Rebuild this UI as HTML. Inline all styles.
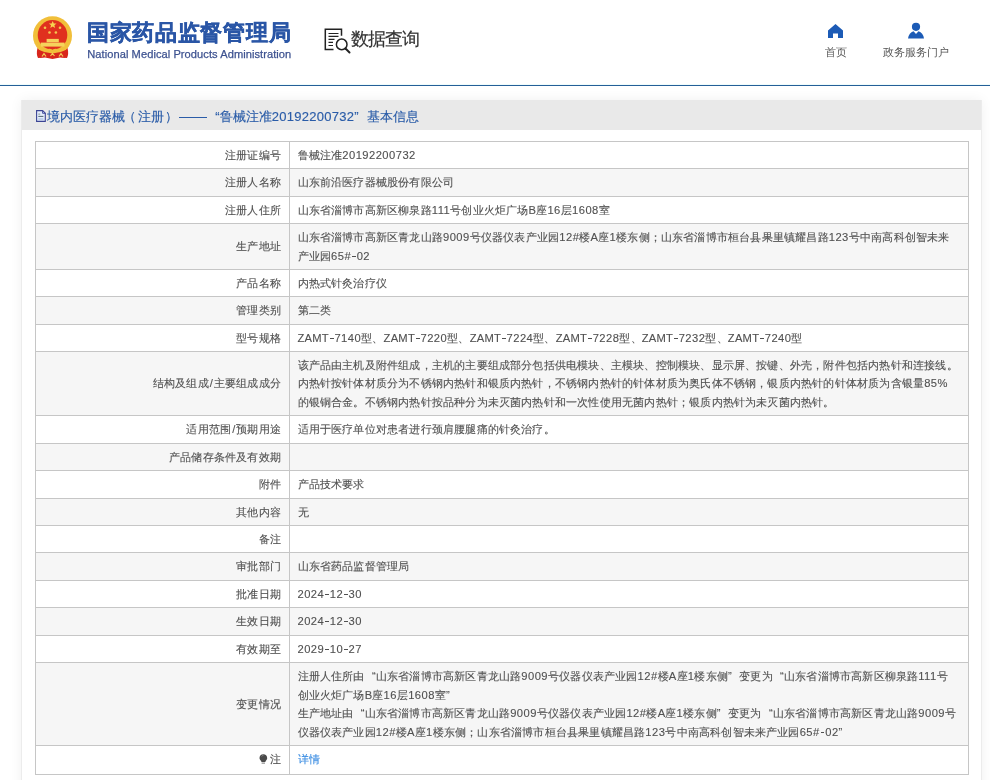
<!DOCTYPE html>
<html><head><meta charset="utf-8">
<style>
*{margin:0;padding:0;box-sizing:border-box}
html,body{width:990px;height:780px;overflow:hidden;background:#fff}
body{font-family:"Liberation Sans",sans-serif;color:#505050}
#wrap{position:relative;width:990px;height:780px;transform:translateZ(0)}
.abs{position:absolute}
#hdrline{left:0;top:85px;width:990px;height:1px;background:#255f98}
#hdrline2{left:0;top:84px;width:990px;height:1px;background:#effcfc}
#t1{left:87px;top:18px;font-size:22px;letter-spacing:0.7px;font-weight:bold;color:#2a56a6;-webkit-text-stroke:0.4px #2a56a6;white-space:nowrap;line-height:30px}
#t2{left:87.3px;top:46.7px;font-size:11.1px;letter-spacing:0.06px;color:#3d5290;-webkit-text-stroke:0.25px #3d5290;white-space:nowrap;line-height:14px}
#q{left:351px;top:26px;font-size:17.5px;letter-spacing:-1px;color:#333;-webkit-text-stroke:0.2px #333;white-space:nowrap;line-height:26px}
.nav{font-size:11.2px;color:#555;white-space:nowrap;line-height:14px;text-align:center}
#panel{left:21px;top:100px;width:961px;height:700px;background:#fff;border:1px solid #ececec;border-top:0;box-shadow:0 0 12px rgba(0,0,0,0.06)}
#phead{left:22px;top:100px;width:959px;height:30px;background:#e9e9e9}
#ptitle{left:47px;top:106.6px;font-size:13px;color:#2a5ca8;-webkit-text-stroke:0.15px #2a5ca8;white-space:nowrap;line-height:19px}
.row{position:absolute;left:35px;width:934px;border:1px solid #c6c6c6;border-bottom:none}
.row.g{background:#f6f6f6}
.lab{-webkit-text-stroke:0.12px #555;position:absolute;left:0;top:0;bottom:0;width:254px;display:flex;align-items:center;justify-content:flex-end;padding-right:9px;font-size:11.2px;line-height:18.5px;letter-spacing:0.19px;white-space:nowrap}
.val{-webkit-text-stroke:0.12px #555;position:absolute;left:253px;top:0;bottom:0;right:0;border-left:1px solid #c6c6c6;display:flex;align-items:center;padding-left:7.5px;font-size:11.2px;line-height:18.5px;letter-spacing:0.19px;white-space:nowrap}
.val>div{}
.hl{position:absolute;left:35px;width:934px;height:1px;background:#c6c6c6}
.d{letter-spacing:0.46px}
.u{letter-spacing:0.25px}
.h{display:inline-block;width:3.8px;height:1.1px;margin:0 0.9px 0 0.8px;background:currentColor;vertical-align:0.26em}
.ql{display:inline-block;width:1em;text-align:right}
.qr{display:inline-block;width:1em;text-align:left}
.dash{display:inline-block;height:1px;background:currentColor;vertical-align:0.32em}
.link{color:#3a8ee6;font-size:12px}
.s{padding:0 0.8px 0 1px}
.row.last .lab,.row.last .val{padding-bottom:1.5px}
.link{color:#3b8de2;font-size:11.2px;-webkit-text-stroke:0.12px #3b8de2}

</style></head><body><div id="wrap">
<div class="abs" id="panel"></div>
<div class="abs" id="hdrline2"></div>
<div class="abs" id="hdrline"></div>
<svg class="abs" style="left:28px;top:12px" width="50" height="50" viewBox="0 0 50 50">
  <path d="M9.5 36 Q8 42 10 46 L17 45.5 L24.5 47 L32 45.5 L39 46 Q41 42 39.5 36 Z" fill="#d8261c"/>
  <circle cx="24.5" cy="23.7" r="19.5" fill="#f1bf3a"/>
  <circle cx="24.5" cy="22.9" r="14.8" fill="#e0301e"/>
  <path d="M9.8 37.5 Q10 44 12 45.8 L20 44.5 L24.5 46 L29 44.5 L37 45.8 Q39 44 39.2 37.5 Q32 41 24.5 41.5 Q17 41 9.8 37.5Z" fill="#d8261c"/>
  <path d="M17 38.5 Q21 35.5 24.5 38 Q28 35.5 32 38.5 Q28 41 24.5 39.5 Q21 41 17 38.5Z" fill="#f1bf3a"/>
  <path d="M14 44.5 L16 41.5 L18 44.5 M31 44.5 L33 41.5 L35 44.5 M22.5 44 L24.5 41.5 L26.5 44" stroke="#f3cc55" stroke-width="1.2" fill="none"/>
  <rect x="18.6" y="26.9" width="12.2" height="3.4" fill="#f6d35c"/>
  <rect x="12.8" y="30.6" width="23.7" height="4" fill="#f6d35c"/>
  <polygon points="24.7,9 25.8,11.5 28.5,11.6 26.4,13.3 27.1,16 24.7,14.5 22.3,16 23,13.3 20.9,11.6 23.6,11.5" fill="#f7d350"/>
  <circle cx="17" cy="15.7" r="1.3" fill="#f3c850"/>
  <circle cx="32" cy="15.7" r="1.3" fill="#f3c850"/>
  <circle cx="21.5" cy="20.5" r="1.3" fill="#f3c850"/>
  <circle cx="27.9" cy="20.5" r="1.3" fill="#f3c850"/>
</svg>
<div class="abs" id="t1">国家药品监督管理局</div>
<div class="abs" id="t2">National Medical Products Administration</div>
<svg class="abs" style="left:322px;top:26px" width="32" height="30" viewBox="0 0 32 30">
  <path d="M11.5 23.5 H3.3 V3.2 H19.5 V9.8" stroke="#222" stroke-width="1.5" fill="none"/>
  <path d="M6.5 7.5H16.5 M6.5 10.3H16.5 M6.5 13.3H12.5 M6.5 16.3H11 M6.5 19.5H11" stroke="#222" stroke-width="1.2"/>
  <circle cx="19.7" cy="18.4" r="5.3" stroke="#222" stroke-width="1.5" fill="none"/>
  <path d="M23.5 22.5 L27.5 26.5" stroke="#222" stroke-width="2" stroke-linecap="round"/>
</svg>
<div class="abs" id="q">数据查询</div>
<svg class="abs" style="left:827px;top:23px" width="17" height="16" viewBox="0 0 17 16">
  <path d="M8.5 1 L16 7.5 V15 H11 V10.5 H6 V15 H1 V7.5 Z" fill="#1c5bb6"/>
</svg>
<div class="abs nav" style="left:815px;top:45px;width:41px">首页</div>
<svg class="abs" style="left:907px;top:22px" width="18" height="18" viewBox="0 0 18 18">
  <circle cx="9" cy="4.8" r="4.1" fill="#1c5bb6"/>
  <path d="M1 16.6 Q2 10.5 6.5 9.3 L9 12 L11.5 9.3 Q16 10.5 17 16.6 Z" fill="#1c5bb6"/>
</svg>
<div class="abs nav" style="left:875px;top:45px;width:82px">政务服务门户</div>
<div class="abs" id="phead"></div>
<svg class="abs" style="left:35px;top:109px" width="12" height="14" viewBox="0 0 12 14">
  <path d="M1.6 1.6 H7.6 L10.3 4.3 V12.4 H1.6 Z" stroke="#3b4494" stroke-width="1.1" fill="#e4edfb"/>
  <path d="M7.6 1.6 V4.3 H10.3 Z" fill="#b9cdf3" stroke="#3b4494" stroke-width="0.9"/>
  <path d="M3.3 5.1 H5.2" stroke="#7a8a86" stroke-width="0.9"/>
  <path d="M3.3 7.4 H8.4" stroke="#3d5562" stroke-width="0.9"/>
  <path d="M3.3 10 H8.4" stroke="#9db6de" stroke-width="1"/>
</svg>
<div class="abs" id="ptitle">境内医疗器械<span style="position:relative;left:-2.4px">（</span>注册<span style="position:relative;left:1.3px">）</span><span class="dash" style="width:27.7px;margin-left:2px;vertical-align:0.2em;height:1.2px"></span><span class="ql">“</span>鲁械注准<span class="l" style="letter-spacing:0.28px">20192200732</span><span class="qr">”</span>基本信息</div>

<div id="rows">
<div class="row" style="top:141px;height:27px"><div class="lab"><div>注册证编号</div></div><div class="val"><div>鲁械注准<span class="d">20192200732</span></div></div></div>
<div class="row g" style="top:168px;height:28px"><div class="lab"><div>注册人名称</div></div><div class="val"><div>山东前沿医疗器械股份有限公司</div></div></div>
<div class="row" style="top:196px;height:27px"><div class="lab"><div>注册人住所</div></div><div class="val"><div>山东省淄博市高新区柳泉路<span class="d">111</span>号创业火炬广场<span class="u">B</span>座<span class="d">16</span>层<span class="d">1608</span>室</div></div></div>
<div class="row g" style="top:223px;height:46px"><div class="lab"><div>生产地址</div></div><div class="val"><div>山东省淄博市高新区青龙山路<span class="d">9009</span>号仪器仪表产业园<span class="d">12</span><span class="d">#</span>楼<span class="u">A</span>座<span class="d">1</span>楼东侧；山东省淄博市桓台县果里镇耀昌路<span class="d">123</span>号中南高科创智未来<br>产业园<span class="d">65</span><span class="d">#</span><span class="h"></span><span class="d">02</span></div></div></div>
<div class="row" style="top:269px;height:27px"><div class="lab"><div>产品名称</div></div><div class="val"><div>内热式针灸治疗仪</div></div></div>
<div class="row g" style="top:296px;height:28px"><div class="lab"><div>管理类别</div></div><div class="val"><div>第二类</div></div></div>
<div class="row" style="top:324px;height:27px"><div class="lab"><div>型号规格</div></div><div class="val"><div><span class="u">ZAMT</span><span class="h"></span><span class="d">7140</span>型、<span class="u">ZAMT</span><span class="h"></span><span class="d">7220</span>型、<span class="u">ZAMT</span><span class="h"></span><span class="d">7224</span>型、<span class="u">ZAMT</span><span class="h"></span><span class="d">7228</span>型、<span class="u">ZAMT</span><span class="h"></span><span class="d">7232</span>型、<span class="u">ZAMT</span><span class="h"></span><span class="d">7240</span>型</div></div></div>
<div class="row g" style="top:351px;height:64px"><div class="lab"><div>结构及组成<span class="s">/</span>主要组成成分</div></div><div class="val"><div>该产品由主机及附件组成，主机的主要组成部分包括供电模块、主模块、控制模块、显示屏、按键、外壳，附件包括内热针和连接线。<br>内热针按针体材质分为不锈钢内热针和银质内热针，不锈钢内热针的针体材质为奥氏体不锈钢，银质内热针的针体材质为含银量<span class="d">85</span><span class="d">%</span><br>的银铜合金。不锈钢内热针按品种分为未灭菌内热针和一次性使用无菌内热针；银质内热针为未灭菌内热针。</div></div></div>
<div class="row" style="top:415px;height:28px"><div class="lab"><div>适用范围<span class="s">/</span>预期用途</div></div><div class="val"><div>适用于医疗单位对患者进行颈肩腰腿痛的针灸治疗。</div></div></div>
<div class="row g" style="top:443px;height:27px"><div class="lab"><div>产品储存条件及有效期</div></div><div class="val"><div></div></div></div>
<div class="row" style="top:470px;height:28px"><div class="lab"><div>附件</div></div><div class="val"><div>产品技术要求</div></div></div>
<div class="row g" style="top:498px;height:27px"><div class="lab"><div>其他内容</div></div><div class="val"><div>无</div></div></div>
<div class="row" style="top:525px;height:27px"><div class="lab"><div>备注</div></div><div class="val"><div></div></div></div>
<div class="row g" style="top:552px;height:28px"><div class="lab"><div>审批部门</div></div><div class="val"><div>山东省药品监督管理局</div></div></div>
<div class="row" style="top:580px;height:27px"><div class="lab"><div>批准日期</div></div><div class="val"><div><span class="d">2024</span><span class="h"></span><span class="d">12</span><span class="h"></span><span class="d">30</span></div></div></div>
<div class="row g" style="top:607px;height:28px"><div class="lab"><div>生效日期</div></div><div class="val"><div><span class="d">2024</span><span class="h"></span><span class="d">12</span><span class="h"></span><span class="d">30</span></div></div></div>
<div class="row" style="top:635px;height:27px"><div class="lab"><div>有效期至</div></div><div class="val"><div><span class="d">2029</span><span class="h"></span><span class="d">10</span><span class="h"></span><span class="d">27</span></div></div></div>
<div class="row g" style="top:662px;height:83px"><div class="lab"><div>变更情况</div></div><div class="val"><div>注册人住所由<span class="ql">“</span>山东省淄博市高新区青龙山路<span class="d">9009</span>号仪器仪表产业园<span class="d">12</span><span class="d">#</span>楼<span class="u">A</span>座<span class="d">1</span>楼东侧<span class="qr">”</span>变更为<span class="ql">“</span>山东省淄博市高新区柳泉路<span class="d">111</span>号<br>创业火炬广场<span class="u">B</span>座<span class="d">16</span>层<span class="d">1608</span>室<span class="qr">”</span><br>生产地址由<span class="ql">“</span>山东省淄博市高新区青龙山路<span class="d">9009</span>号仪器仪表产业园<span class="d">12</span><span class="d">#</span>楼<span class="u">A</span>座<span class="d">1</span>楼东侧<span class="qr">”</span>变更为<span class="ql">“</span>山东省淄博市高新区青龙山路<span class="d">9009</span>号<br>仪器仪表产业园<span class="d">12</span><span class="d">#</span>楼<span class="u">A</span>座<span class="d">1</span>楼东侧；山东省淄博市桓台县果里镇耀昌路<span class="d">123</span>号中南高科创智未来产业园<span class="d">65</span><span class="d">#</span><span class="h"></span><span class="d">02</span><span class="qr">”</span></div></div></div>
<div class="row last" style="top:745px;height:29px"><div class="lab"><div><svg width="9" height="10" viewBox="0 0 9 10" style="margin-right:1.5px;vertical-align:-0.5px"><path d="M4.3 0.3 C6.6 0.3 8.2 2 8.2 4.1 C8.2 5.6 7.3 6.5 6.5 7.3 V8 H2.3 V7.3 C1.5 6.5 0.5 5.6 0.5 4.1 C0.5 2 2 0.3 4.3 0.3Z" fill="#4a4a4a"/><path d="M2.6 2.4 Q3.3 1.5 4.4 1.4" stroke="#9a9a9a" stroke-width="0.8" fill="none"/><path d="M2.6 8.6 H6 V9.6 H2.6Z" fill="#777"/></svg>注</div></div><div class="val"><div><span class="link">详情</span></div></div></div>
<div class="hl" style="top:774px"></div>
</div>
</div></body></html>
